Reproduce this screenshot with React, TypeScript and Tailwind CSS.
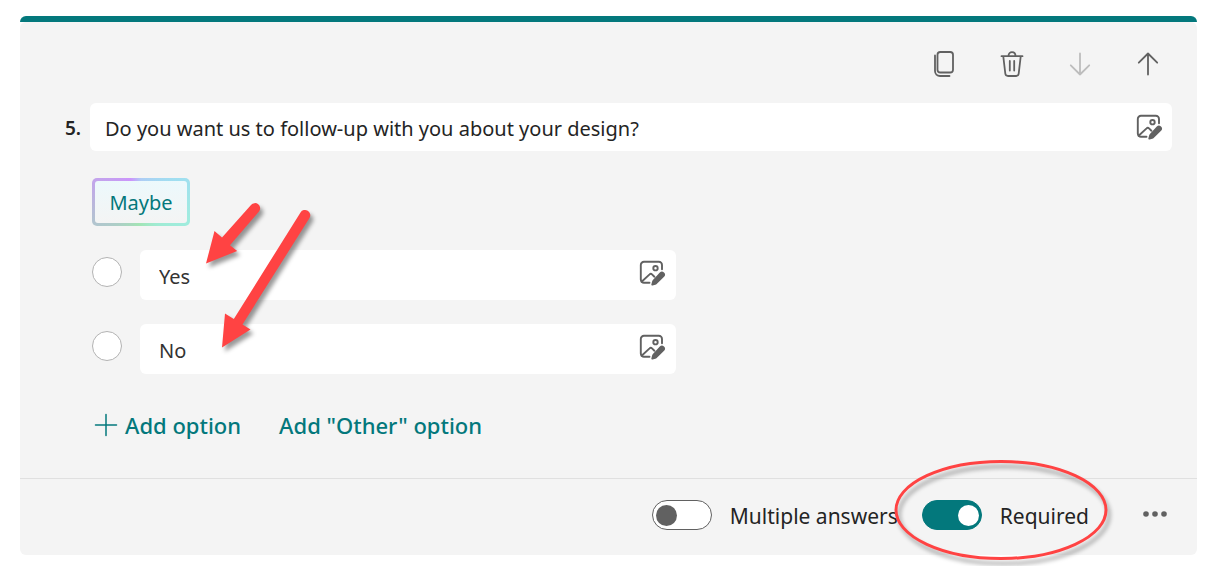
import { useState } from "react";
import type { ReactNode } from "react";

const iconProps = {
  fill: "none",
  stroke: "currentColor",
  strokeLinecap: "round" as const,
  strokeLinejoin: "round" as const,
};

function CopyIcon() {
  return (
    <svg width="32" height="32" viewBox="0 0 32 32" strokeWidth="1.8" {...iconProps}>
      <rect x="9.5" y="4" width="15.5" height="20.5" rx="2.8" />
      <path d="M7 7.5v15.5a5 5 0 0 0 5 5h9.5" />
    </svg>
  );
}

function TrashIcon() {
  return (
    <svg width="32" height="32" viewBox="0 0 32 32" strokeWidth="1.8" {...iconProps}>
      <path d="M5.5 8.2h21M12.5 8c0-5.2 7-5.2 7 0M7.3 8.5l2 17a2.8 2.8 0 0 0 2.8 2.5h7.8a2.8 2.8 0 0 0 2.8-2.5l2-17M13.8 13v9.5M18.2 13v9.5" />
    </svg>
  );
}

function ArrowDownIcon() {
  return (
    <svg width="32" height="32" viewBox="0 0 32 32" strokeWidth="1.8" {...iconProps}>
      <path d="M16 5.5v21M6.8 17.3 16 26.5l9.2-9.2" />
    </svg>
  );
}

function ArrowUpIcon() {
  return (
    <svg width="32" height="32" viewBox="0 0 32 32" strokeWidth="1.8" {...iconProps}>
      <path d="M16 26.5V5.5M6.8 14.7 16 5.5l9.2 9.2" />
    </svg>
  );
}

function ImageEditIcon() {
  return (
    <svg width="28" height="28" viewBox="0 0 28 28" strokeWidth="1.9" {...iconProps}>
      <path d="M24 10.300V6A3.200 3.200 0 0 0 20.800 2.800H6A3.200 3.200 0 0 0 2.800 6v14.600a3.200 3.200 0 0 0 3.200 3.200h5.500" />
      <path d="m3.600 22.800 8-7.400a1.700 1.700 0 0 1 2.400 0l2.400 2.300" />
      <circle cx="17.500" cy="9.200" r="2.200" />
      <path
        d="M21.800 13.600a2.900 2.900 0 0 1 4.300 4.100l-7.400 7.200a3 3 0 0 1-1.400.9l-2.700.7a1 1 0 0 1-1.200-1.200l.7-2.700a3 3 0 0 1 .8-1.500z"
        fill="currentColor"
        stroke="none"
      />
    </svg>
  );
}

function PlusIcon() {
  return (
    <svg width="24" height="24" viewBox="0 0 24 24" strokeWidth="1.5" {...iconProps}>
      <path d="M12 1.5v21M1.5 12h21" />
    </svg>
  );
}

function ToolButton({ label, disabled, children }: { label: string; disabled?: boolean; children: ReactNode }) {
  return (
    <button type="button" aria-label={label} disabled={disabled} className="text-[#616161] disabled:text-[#bdbdbd]">
      {children}
    </button>
  );
}

function Option({ name }: { name: string }) {
  const [value, setValue] = useState(name);
  return (
    <li className="flex items-start gap-[18px]">
      <input
        type="radio"
        name="answer"
        aria-label={`Choose ${name}`}
        className="mt-[7px] size-[30px] shrink-0 appearance-none rounded-full border border-[#b3b3b3] bg-white"
      />
      <div className="flex h-[50px] max-w-[536px] flex-1 items-center rounded-md bg-white pr-2.5 pl-[19px]">
        <input
          aria-label={`Option ${name}`}
          value={value}
          onChange={(e) => setValue(e.target.value)}
          className="h-8 min-w-0 flex-1 bg-transparent pt-0.5 text-[#333333] outline-none"
        />
        <button type="button" aria-label={`Insert media for ${name}`} className="mb-1 text-[#616161]">
          <ImageEditIcon />
        </button>
      </div>
    </li>
  );
}

function Toggle({ id, on }: { id: string; on: boolean }) {
  return (
    <input
      id={id}
      type="checkbox"
      role="switch"
      defaultChecked={on}
      className="flex h-[30px] w-[60px] shrink-0 appearance-none items-center rounded-full border border-[#616161] bg-white px-[3px] before:size-[21px] before:rounded-full before:bg-[#616161] checked:justify-end checked:border-[#03787c] checked:bg-[#03787c] checked:px-0.5 checked:before:bg-white"
    />
  );
}

function PointerArrows() {
  return (
    <svg
      className="pointer-events-none absolute top-0 left-0 drop-shadow-[3px_4px_2px_rgba(0,0,0,0.4)]"
      width="240"
      height="190"
      viewBox="92 178 240 190"
      fill="#ff4343"
      aria-hidden="true"
    >
      <path d="M206 263.5 214.5 231 222 237.5 251 205a5 5 0 0 1 8 6.5L230 245.3 237.2 251Z" />
      <path d="M222 347.5 225 313.5 233.8 319 300.5 212.5a5 5 0 0 1 9 5.5L242.500 324.5 250.500 329.5Z" />
    </svg>
  );
}

export default function App() {
  const [question, setQuestion] = useState("Do you want us to follow-up with you about your design?");
  return (
    <main className="bg-white pt-4 pr-[19px] pb-[11px] pl-5 font-['Noto_Sans',sans-serif] text-[20px] leading-[30px] text-[#242424]">
      <section>
        <div className="h-1.5 rounded-t-md bg-[#03787c]" />
        <div className="rounded-md bg-[#f4f4f4]">
          <div className="pt-[26px] pr-[25px] pl-[45px]">
            <div className="flex justify-end gap-9 pr-2">
              <ToolButton label="Copy question">
                <CopyIcon />
              </ToolButton>
              <ToolButton label="Delete question">
                <TrashIcon />
              </ToolButton>
              <ToolButton label="Move question down" disabled>
                <ArrowDownIcon />
              </ToolButton>
              <ToolButton label="Move question up">
                <ArrowUpIcon />
              </ToolButton>
            </div>

            <div className="mt-[23px] flex items-center">
              <label htmlFor="question" className="w-[25px] shrink-0 pt-0.5 text-[19px] font-semibold">
                5.
              </label>
              <div className="flex h-12 flex-1 items-center rounded-md bg-white pr-[9px] pl-[15px]">
                <input
                  id="question"
                  value={question}
                  onChange={(e) => setQuestion(e.target.value)}
                  className="h-8 min-w-0 flex-1 bg-transparent pt-0.5 outline-none"
                />
                <button type="button" aria-label="Insert media" className="text-[#616161]">
                  <ImageEditIcon />
                </button>
              </div>
            </div>

            <div className="relative mt-[27px] pl-[27px]">
              <button
                type="button"
                className="block h-12 w-[98px] rounded-[5px] bg-[conic-gradient(from_0deg_at_50%_50%,#aecdf5,#a0dff0_60deg,#a0ecdf_110deg,#a0ebd2_145deg,#a3e4b4_185deg,#b0c8cc_240deg,#c4a2ee_300deg,#cc94fc_335deg,#aecdf5)] p-[3px] text-[#03787c]"
              >
                <span className="flex h-full items-center justify-center rounded-[3px] bg-linear-to-b from-[#ecf9fc] to-[#f4f4f4] pt-0.5">
                  Maybe
                </span>
              </button>
              <ul className="mt-6 flex flex-col gap-6">
                <Option name="Yes" />
                <Option name="No" />
              </ul>
              <div className="absolute top-0 left-[27px]">
                <PointerArrows />
              </div>
            </div>

            <div className="mt-9 flex gap-[38px] pb-[38px] pl-[29px] text-[22px] font-medium text-[#03787c]">
              <button type="button" className="flex items-center gap-[7px]">
                <PlusIcon />
                Add option
              </button>
              <button type="button">Add "Other" option</button>
            </div>
          </div>

          <div className="flex h-[77px] items-center justify-end border-t border-[#e0e0e0] pr-[25px] pb-1 text-[21px]">
            <div className="flex items-center gap-[18px]">
              <Toggle id="multiple" on={false} />
              <label htmlFor="multiple" className="pt-0.5">
                Multiple answers
              </label>
            </div>
            <div className="relative ml-6 flex items-center gap-[18px]">
              <Toggle id="required" on />
              <label htmlFor="required" className="pt-0.5">
                Required
              </label>
              <svg
                className="pointer-events-none absolute -top-[43px] -left-8 drop-shadow-[3px_5px_2px_rgba(0,0,0,0.35)]"
                width="224"
                height="108"
                viewBox="890 456 224 108"
                fill="none"
                stroke="#ff4343"
                strokeWidth="3"
                aria-hidden="true"
              >
                <ellipse cx="1001" cy="510" rx="105" ry="48.5" />
              </svg>
            </div>
            <button type="button" aria-label="More settings" className="ml-[49px] text-[#616161]">
              <svg width="34" height="30" viewBox="0 0 34 30" fill="currentColor">
                <circle cx="8" cy="14" r="2.8" />
                <circle cx="17" cy="14" r="2.8" />
                <circle cx="26" cy="14" r="2.8" />
              </svg>
            </button>
          </div>
        </div>
      </section>
    </main>
  );
}
